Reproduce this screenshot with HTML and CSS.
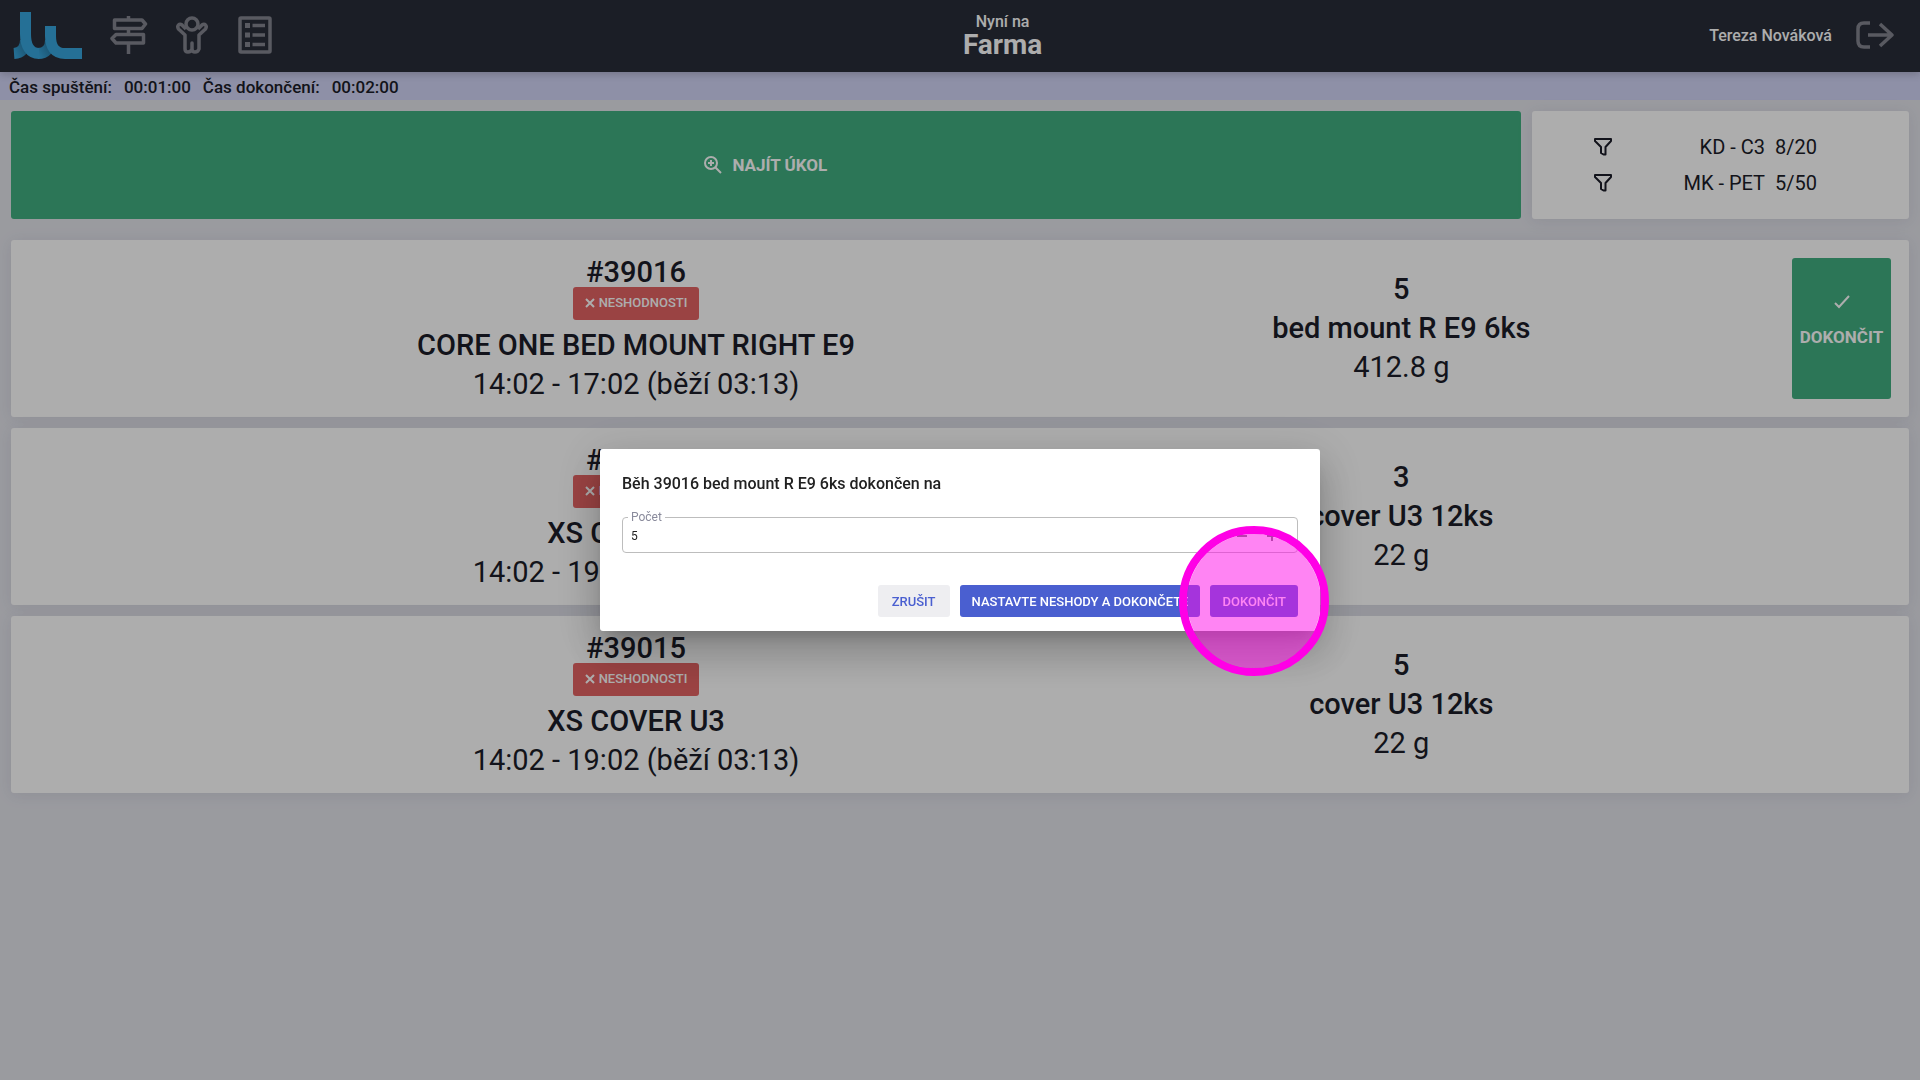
FILE: index.html
```html
<!DOCTYPE html>
<html lang="cs">
<head>
    <meta charset="utf-8">
    <meta name="viewport" content="width=device-width, initial-scale=1">
    <title>Farma</title>
    <link rel="stylesheet" href="styles.css">
</head>
<body>

    <!-- Top bar -->
    <header class="topbar">
        <nav class="topbar-nav">
            <a href="#home" class="logo" aria-label="Home">
                <svg width="70" height="48" viewBox="0 0 70 48">
                    <defs>
                        <linearGradient id="shade-a" gradientUnits="userSpaceOnUse" x1="2" y1="44" x2="13" y2="38">
                            <stop offset="0" stop-color="#37a6dd"/>
                            <stop offset="1" stop-color="#2a80ad"/>
                        </linearGradient>
                        <linearGradient id="shade-b" gradientUnits="userSpaceOnUse" x1="26" y1="44" x2="37" y2="38">
                            <stop offset="0" stop-color="#37a6dd"/>
                            <stop offset="1" stop-color="#2a80ad"/>
                        </linearGradient>
                    </defs>
                    <path stroke="url(#shade-a)" d="M1 41.500C8 41 12.500 37 12.500 28"/>
                    <path stroke="url(#shade-b)" d="M25 41.500C33 41.500 37.500 36 37.500 28"/>
                    <path d="M12.500 0V22C12.500 34 17 41.500 26 41.500"/>
                    <path d="M37.500 14V24C37.500 35 42 41.500 52 41.500H69"/>
                </svg>
            </a>
            <a href="#locations" class="nav-link" aria-label="Locations">
                <svg width="38" height="38" viewBox="0 0 38 38" stroke-width="3.5">
                    <path d="M18.500 0V4M18.500 12.500V18.500M18.500 27V38M4.500 4H32L35.500 8L32 12.500H4.500ZM33.500 18.500H6L2 22.500L6 27H33.500Z"/>
                </svg>
            </a>
            <a href="#people" class="nav-link" aria-label="People">
                <svg width="32" height="38" viewBox="0 0 32 38" stroke-width="3.5">
                    <circle cx="16" cy="8" r="6"/>
                    <path d="M10 13L6 9Q4 7.500 2.500 9T2.500 13L9 19V33Q9 36 12 36T16 33V27V33Q16 36 19 36T23 33V19L29.500 13Q31 10.500 29.500 9T26 9L22 13"/>
                </svg>
            </a>
            <a href="#tasks" class="nav-link" aria-label="Tasks">
                <svg width="34" height="38" viewBox="0 0 34 38" stroke-width="3.5">
                    <rect x="2" y="2" width="30" height="34" rx="1"/>
                    <path d="M14.500 9.500H27M14.500 19H27M14.500 28.500H27"/>
                    <path stroke-width="5" d="M7 9.500H12M7 19H12M7 28.500H12"/>
                </svg>
            </a>
        </nav>
        <div class="place">
            <span>Nyní na</span>
            <strong>Farma</strong>
        </div>
        <div class="user">
            <span>Tereza Nováková</span>
            <a href="#logout" class="nav-link" aria-label="Logout">
                <svg width="38" height="30" viewBox="0 0 38 30" stroke-width="3.5">
                    <path d="M14 3H8Q2 3 2 9V21Q2 27 8 27H14M12 15H35M24 4L36 15L24 26"/>
                </svg>
            </a>
        </div>
    </header>

    <div class="times">
        <span>Čas spuštění:</span>
        <span>00:01:00</span>
        <span>Čas dokončení:</span>
        <span>00:02:00</span>
    </div>

    <main>
        <div class="actions">
            <button type="button" class="btn-find">
                <svg width="18" height="18" viewBox="0 0 18 18">
                    <path d="M11.500 11.500L17 17M7 4V10M4 7H10"/>
                    <circle cx="7" cy="7" r="6"/>
                </svg>
                Najít úkol
            </button>
            <div class="filters card">
                <div class="filter">
                    <svg width="18" height="18" viewBox="0 0 18 18"><path d="M1 1H17V3L11.500 9V16.500H9.500L7 15V9L1 3Z"/></svg>
                    <span class="filter-name">KD - C3</span>
                    <span class="filter-count">8/20</span>
                </div>
                <div class="filter">
                    <svg width="18" height="18" viewBox="0 0 18 18"><path d="M1 1H17V3L11.500 9V16.500H9.500L7 15V9L1 3Z"/></svg>
                    <span class="filter-name">MK - PET</span>
                    <span class="filter-count">5/50</span>
                </div>
            </div>
        </div>

        <!-- Running tasks -->
        <section class="tasks">
            <article class="task card">
                <div class="task-run">
                    <h2 class="task-id">#39016</h2>
                    <button type="button" class="btn-error">
                        <svg width="10" height="10" viewBox="0 0 10 10"><path d="M1 1L9 9M9 1L1 9"/></svg>
                        Neshodnosti
                    </button>
                    <h3>CORE ONE BED MOUNT RIGHT E9</h3>
                    <p>14:02 - 17:02 (běží 03:13)</p>
                </div>
                <div class="task-part">
                    <h3>5</h3>
                    <h3>bed mount R E9 6ks</h3>
                    <p>412.8 g</p>
                </div>
                <button type="button" class="btn-done">
                    <svg width="18" height="18" viewBox="0 0 18 18"><path d="M2 10L6 14L16 3"/></svg>
                    Dokončit
                </button>
            </article>
            <article class="task card">
                <div class="task-run">
                    <h2 class="task-id">#39017</h2>
                    <button type="button" class="btn-error">
                        <svg width="10" height="10" viewBox="0 0 10 10"><path d="M1 1L9 9M9 1L1 9"/></svg>
                        Neshodnosti
                    </button>
                    <h3>XS COVER U3</h3>
                    <p>14:02 - 19:02 (běží 03:13)</p>
                </div>
                <div class="task-part">
                    <h3>3</h3>
                    <h3>cover U3 12ks</h3>
                    <p>22 g</p>
                </div>
            </article>
            <article class="task card">
                <div class="task-run">
                    <h2 class="task-id">#39015</h2>
                    <button type="button" class="btn-error">
                        <svg width="10" height="10" viewBox="0 0 10 10"><path d="M1 1L9 9M9 1L1 9"/></svg>
                        Neshodnosti
                    </button>
                    <h3>XS COVER U3</h3>
                    <p>14:02 - 19:02 (běží 03:13)</p>
                </div>
                <div class="task-part">
                    <h3>5</h3>
                    <h3>cover U3 12ks</h3>
                    <p>22 g</p>
                </div>
            </article>
        </section>
    </main>

    <!-- Finish dialog -->
    <div class="backdrop">
        <form class="dialog" role="dialog" aria-labelledby="dialog-title">
            <h1 id="dialog-title">Běh 39016 bed mount R E9 6ks dokončen na</h1>
            <fieldset class="field">
                <legend><label for="count">Počet</label></legend>
                <input type="text" id="count" inputmode="numeric" value="5">
                <button type="button" class="btn-step" aria-label="Minus">
                    <svg width="10" height="10" viewBox="0 0 10 10"><path d="M0 5H10"/></svg>
                </button>
                <button type="button" class="btn-step" aria-label="Plus">
                    <svg width="10" height="10" viewBox="0 0 10 10"><path d="M0 5H10M5 0V10"/></svg>
                </button>
            </fieldset>
            <div class="dialog-actions">
                <button type="button" class="btn btn-light">Zrušit</button>
                <button type="button" class="btn">Nastavte neshody a dokončete</button>
                <div class="marked">
                    <button type="button" class="btn">Dokončit</button>
                    <span class="marker"></span>
                </div>
            </div>
        </form>
    </div>

</body>
</html>
```

FILE: styles.css
```css
* {
    box-sizing: border-box;
}

body {
    margin: 0;
    min-height: 100vh;
    background: #e4e5eb;
    color: #1b1c28;
    font-family: Roboto, "Liberation Sans", sans-serif;
    font-size: 17px;
}

h1, h2, h3, p {
    margin: 0;
    font-weight: 500;
}

button, input {
    font-family: inherit;
    border: 0;
    padding: 0;
}

button {
    border-radius: 3px;
    color: #fff;
    font-weight: 500;
    text-transform: uppercase;
}

svg {
    display: block;
    fill: none;
    stroke: currentColor;
}

/* Top bar */

.topbar {
    position: relative;
    display: flex;
    justify-content: space-between;
    align-items: center;
    height: 72px;
    padding: 0 26px 2px 13px;
    background: #292d38;
    color: #fff;
    font-weight: 500;
    box-shadow: 0 2px 8px rgba(0,0,0,0.2);
}

.topbar-nav {
    display: flex;
    align-items: center;
    gap: 25px;
    padding-right: 22px;
}

.logo {
    width: 72px;
    padding-top: 2px;
    color: #37a6dd;
    stroke-width: 11px;
}

.nav-link {
    display: flex;
    justify-content: center;
    width: 38px;
    color: #83858f;
    stroke-linejoin: round;
}

.place {
    display: flex;
    flex-direction: column;
    align-items: center;
    padding-top: 2px;
    font-size: 16px;
    line-height: 18px;
}

.place strong {
    font-size: 28px;
    line-height: 28px;
    font-weight: 700;
}

.user {
    display: flex;
    align-items: center;
    gap: 24px;
    font-size: 16px;
}

.times {
    display: flex;
    gap: 12px;
    padding: 2px 9px 0;
    line-height: 26px;
    background: #d1d4f6;
    font-weight: 500;
}

/* Content */

main {
    padding: 11px;
}

.card {
    background: #fff;
    border-radius: 3px;
    box-shadow: 0 2px 16px rgba(60,60,120,0.1);
}

.actions {
    display: grid;
    grid-template-columns: 4fr 1fr;
    gap: 11px;
    height: 108px;
    margin-bottom: 21px;
}

.btn-find {
    display: flex;
    justify-content: center;
    align-items: center;
    gap: 10px;
    background: #41af80;
    font-size: 17px;
    font-weight: 700;
    stroke-width: 2px;
}

.filters {
    display: flex;
    flex-direction: column;
    justify-content: center;
    padding: 0 92px 0 62px;
    font-size: 20px;
    line-height: 36px;
    stroke-width: 2px;
    stroke-linejoin: round;
}

.filter {
    display: flex;
    align-items: center;
    gap: 10px;
}

.filter-name {
    margin-left: auto;
}

.tasks {
    display: grid;
    gap: 11px;
}

.task {
    display: grid;
    grid-template-columns: 652fr 170fr 178fr;
    padding: 0 18px;
    font-size: 29px;
    line-height: 39px;
    text-align: center;
}

.task h2,
.task h3 {
    font-size: 29px;
}

.task p {
    font-weight: 400;
}

.task-run {
    display: flex;
    flex-direction: column;
    align-items: center;
    padding: 17px 0 13px;
}

.task-run .task-id {
    line-height: 30px;
}

.task-part {
    align-self: center;
    white-space: nowrap;
}

.btn-error {
    display: flex;
    align-items: center;
    gap: 4px;
    height: 33px;
    margin-bottom: 6px;
    padding: 0 12px 2px;
    background: #e46363;
    font-size: 13px;
    stroke-width: 2px;
}

.btn-done {
    display: flex;
    flex-direction: column;
    justify-content: center;
    justify-self: end;
    align-items: center;
    gap: 16px;
    width: 99px;
    margin: 18px 0;
    padding-bottom: 18px;
    background: #41af80;
    font-size: 17px;
    font-weight: 700;
    stroke-width: 2px;
}

/* Dialog */

.backdrop {
    position: fixed;
    inset: 0;
    display: flex;
    justify-content: center;
    align-items: center;
    background: rgba(0,0,0,0.32);
}

.dialog {
    width: 720px;
    padding: 23px 22px 14px;
    border-radius: 3px;
    background: #fff;
    color: #212121;
    box-shadow: 0 11px 15px -7px rgba(0,0,0,0.2), 0 24px 38px 3px rgba(0,0,0,0.14), 0 9px 46px 8px rgba(0,0,0,0.12);
}

.dialog h1 {
    font-size: 16px;
    line-height: 24px;
    margin-bottom: 14px;
}

.field {
    display: flex;
    margin: 0 0 32px;
    padding: 0 10px 0 5px;
    border: 1px solid #bdbdbd;
    border-radius: 4px;
}

.field legend {
    padding: 0 3px;
    color: #8a8b9c;
    font-size: 12px;
    line-height: 14px;
}

.field input {
    flex: 1;
    height: 28px;
    padding: 0 3px 5px;
    background: none;
    color: #212121;
    font-size: 12px;
}

.btn-step {
    display: flex;
    justify-content: center;
    width: 30px;
    padding-top: 7px;
    background: none;
    color: #757575;
    stroke-width: 2px;
}

.dialog-actions {
    display: flex;
    justify-content: flex-end;
    gap: 10px;
}

.btn {
    min-width: 72px;
    height: 32px;
    padding: 0 12px;
    background: #4a5fd0;
    font-size: 13px;
}

.btn-light {
    background: #eeeef1;
    color: #4a5fd0;
}

.marked {
    position: relative;
}

/* Click marker, lies over the button */
.marker {
    position: absolute;
    top: 50%;
    left: 50%;
    width: 150px;
    height: 150px;
    margin: -75px;
    border: 8px solid #ff00e6;
    border-radius: 50%;
    background: rgba(255,10,232,0.5);
    background-clip: padding-box;
    pointer-events: none;
}
```
